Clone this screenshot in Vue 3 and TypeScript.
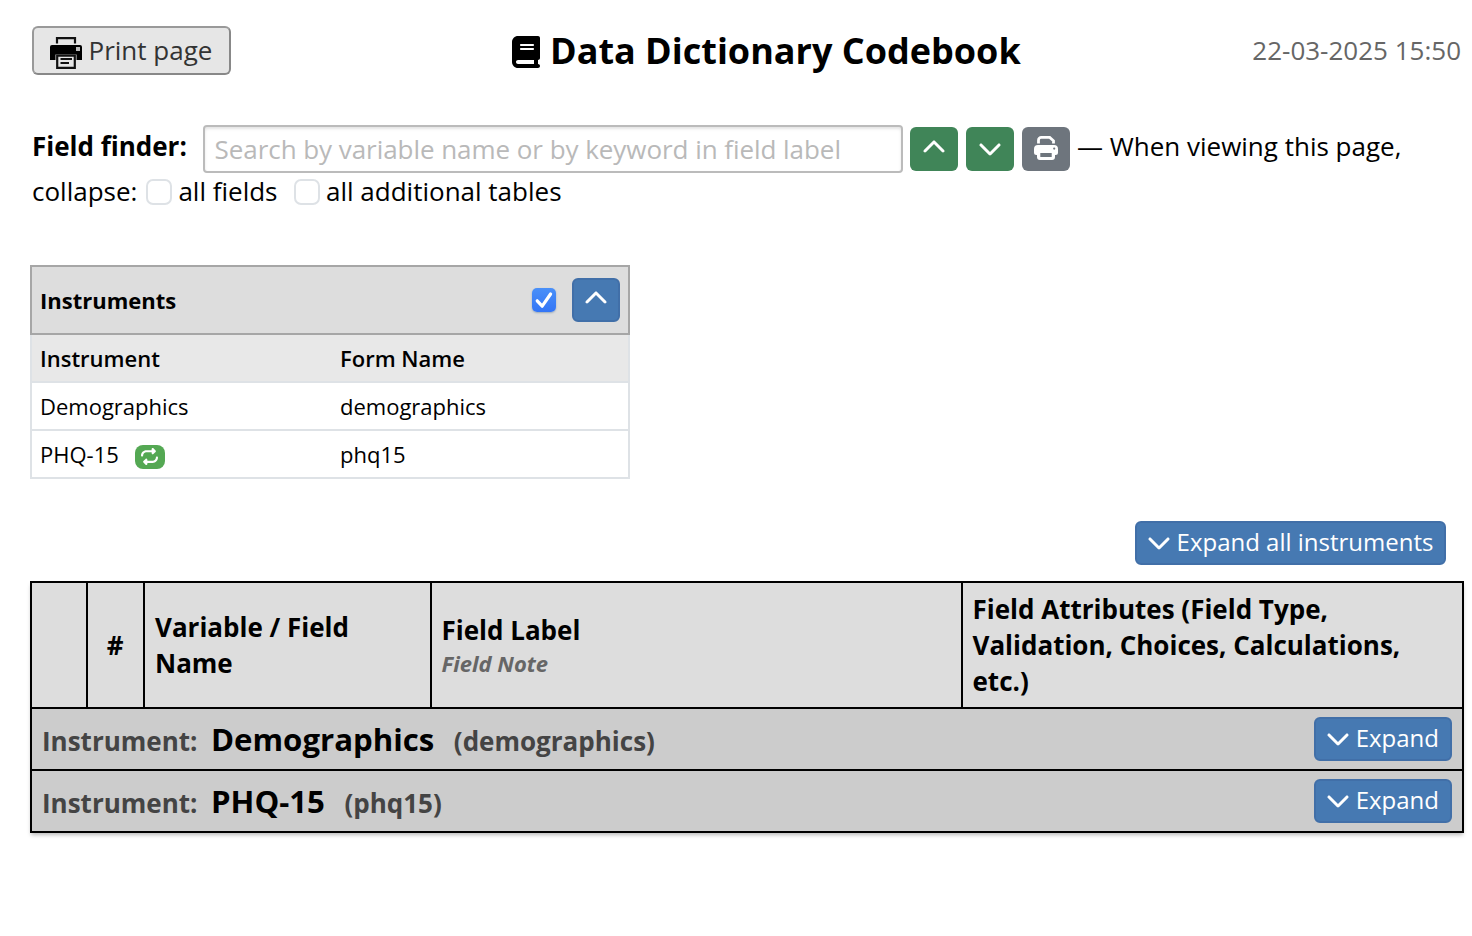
<script setup lang="ts">
import { ref } from 'vue'

interface Instrument {
  label: string
  form: string
  repeating: boolean
}

const instruments: Instrument[] = [
  { label: 'Demographics', form: 'demographics', repeating: false },
  { label: 'PHQ-15', form: 'phq15', repeating: true },
]

const search = ref('')
const collapseFields = ref(false)
const collapseTables = ref(false)

const up =
  'M233.4 105.4c12.5-12.5 32.8-12.5 45.3 0l192 192c12.5 12.5 12.5 32.8 0 45.3s-32.8 12.5-45.3 0L256 173.3 86.6 342.6c-12.5 12.5-32.8 12.5-45.3 0s-12.5-32.8 0-45.3l192-192z'
const down =
  'M233.4 406.6c12.5 12.5 32.8 12.5 45.3 0l192-192c12.5-12.5 12.5-32.8 0-45.3s-32.8-12.5-45.3 0L256 338.7 86.6 169.4c-12.5-12.5-32.8-12.5-45.3 0s-12.5 32.8 0 45.3l192 192z'
const book =
  'M96 0C43 0 0 43 0 96V416c0 53 43 96 96 96H384h32c17.7 0 32-14.3 32-32s-14.3-32-32-32V384c17.7 0 32-14.3 32-32V32c0-17.7-14.3-32-32-32H384 96zm0 384H352v64H96c-17.7 0-32-14.3-32-32s14.3-32 32-32zm32-240c0-8.8 7.2-16 16-16H336c8.8 0 16 7.2 16 16s-7.2 16-16 16H144c-8.8 0-16-7.2-16-16zm16 48H336c8.8 0 16 7.2 16 16s-7.2 16-16 16H144c-8.8 0-16-7.2-16-16s7.2-16 16-16z'
const repeat =
  'M0 224c0 17.7 14.3 32 32 32s32-14.3 32-32c0-53 43-96 96-96H320v32c0 12.9 7.8 24.6 19.8 29.6s25.7 2.2 34.9-6.9l64-64c12.5-12.5 12.5-32.8 0-45.3l-64-64c-9.2-9.2-22.9-11.9-34.9-6.9S320 19.1 320 32V64H160C71.6 64 0 135.6 0 224zm512 64c0-17.7-14.3-32-32-32s-32 14.3-32 32c0 53-43 96-96 96H192V352c0-12.9-7.8-24.6-19.8-29.6s-25.7-2.2-34.9 6.9l-64 64c-12.5 12.5-12.5 32.8 0 45.3l64 64c9.2 9.2 22.9 11.9 34.9 6.9s19.8-16.6 19.8-29.6V448H352c88.4 0 160-71.6 160-160z'
</script>

<template>
  <main class="page">
    <header class="top">
      <button class="print" type="button">
        <svg class="print-icon" viewBox="0 0 32 32">
          <path d="M7 6.5V1.1h18v5.4" fill="none" stroke="#111" stroke-width="2.2" />
          <path d="M2 8h28a2 2 0 0 1 2 2v13H0V10a2 2 0 0 1 2-2z" fill="#000" />
          <rect x="26" y="10" width="4" height="4" fill="#bbb" />
          <path d="M5.5 17.5h21V24h-21z" fill="#e6e6e6" />
          <path d="M7.2 18.6h17.6v12.2H7.2z" fill="#e6e6e6" stroke="#111" stroke-width="2.2" />
          <path d="M10.5 22h11.5M10.5 26h8.5" stroke="#111" stroke-width="2" />
        </svg>
        <span>Print page</span>
      </button>
      <h1 class="title">
        <svg class="book" viewBox="0 0 448 512"><path :d="book" fill="#000" /></svg>
        <span>Data Dictionary Codebook</span>
      </h1>
      <time class="stamp">22-03-2025 15:50</time>
    </header>

    <section class="finder">
      <div class="finder-row">
        <label class="finder-label" for="finder">Field finder:</label>
        <input id="finder" v-model="search" class="search" type="text" placeholder="Search by variable name or by keyword in field label" />
        <button class="square green" type="button"><svg class="fa" viewBox="0 0 512 512"><path :d="up" /></svg></button>
        <button class="square green" type="button"><svg class="fa" viewBox="0 0 512 512"><path :d="down" /></svg></button>
        <button class="square gray" type="button">
          <svg class="fa" viewBox="0 0 24 24">
            <path d="M4.5 7.5V4.2A2.8 2.8 0 0 1 7.3 1.4h8.4l3.8 3.4v2.7" fill="none" stroke="#fff" stroke-width="2.8" />
            <path fill-rule="evenodd" d="M4 9h16a4 4 0 0 1 4 4v3.5a2.5 2.5 0 0 1-2.5 2.5H21v2a3 3 0 0 1-3 3H6a3 3 0 0 1-3-3v-2h-.5A2.5 2.5 0 0 1 0 16.500V13a4 4 0 0 1 4-4zM6.300 17v4h11.400v-4zM20.200 11.500a1.100 1.100 0 1 0 0 2.200 1.100 1.100 0 1 0 0-2.200z" />
          </svg>
        </button>
        <span class="viewing">— When viewing this page,</span>
      </div>
      <div class="collapse-row">
        <span class="collapse-word">collapse:</span>
        <label class="choice first"><input v-model="collapseFields" class="check" type="checkbox" /><span>all fields</span></label>
        <label class="choice"><input v-model="collapseTables" class="check" type="checkbox" /><span>all additional tables</span></label>
      </div>
    </section>

    <section class="instruments">
      <div class="inst-head">
        <span class="inst-title">Instruments</span>
        <span class="checked"><svg viewBox="0 0 24 24"><path d="M5.2 12.8l5 5.4L18.6 6" fill="none" stroke="#fff" stroke-width="3.2" stroke-linecap="round" stroke-linejoin="round" /></svg></span>
        <button class="square blue" type="button"><svg class="fa" viewBox="0 0 512 512"><path :d="up" /></svg></button>
      </div>
      <div class="inst-row labels"><span class="cell">Instrument</span><span class="cell">Form Name</span></div>
      <div v-for="item in instruments" :key="item.form" class="inst-row">
        <span class="cell">{{ item.label }}<span v-if="item.repeating" class="badge"><svg viewBox="0 0 512 512"><path :d="repeat" fill="#fff" /></svg></span></span>
        <span class="cell">{{ item.form }}</span>
      </div>
    </section>

    <div class="expand-all">
      <button class="expand" type="button"><svg class="fa" viewBox="0 0 512 512"><path :d="down" /></svg><span>Expand all instruments</span></button>
    </div>

    <section class="codebook">
      <div class="columns">
        <div class="col"></div>
        <div class="col num">#</div>
        <div class="col variable"><span>Variable / Field Name</span></div>
        <div class="col"><span>Field Label</span><em class="note">Field Note</em></div>
        <div class="col"><span>Field Attributes (Field Type, Validation, Choices, Calculations, etc.)</span></div>
      </div>
      <div v-for="item in instruments" :key="item.form" class="band">
        <span class="muted">Instrument:</span>
        <span class="name">{{ item.label }}</span>
        <span class="muted">({{ item.form }})</span>
        <button class="expand" type="button"><svg class="fa" viewBox="0 0 512 512"><path :d="down" /></svg><span>Expand</span></button>
      </div>
    </section>
  </main>
</template>

<style>
body {
  background: #fff;
}
</style>

<style scoped>
* {
  box-sizing: border-box;
}
.page {
  width: 1472px;
  height: 936px;
  padding: 26px 8px 0 30px;
  overflow: hidden;
  font: 26px/36px 'Open Sans', sans-serif;
  color: #000;
}
button {
  margin: 0;
  font: inherit;
}
svg {
  display: block;
  flex: none;
}
.top {
  display: flex;
  align-items: center;
  height: 49px;
  padding: 0 3px 0 2px;
  white-space: nowrap;
}
.print {
  display: flex;
  align-items: center;
  width: 199px;
  height: 49px;
  padding: 0 0 2px 16px;
  border: 2px solid #999;
  border-right-color: #888;
  border-bottom-color: #888;
  border-radius: 6px;
  background: #e6e6e6;
  color: #333;
}
.print-icon {
  width: 32px;
  height: 32px;
  margin: 6px 6.5px 0 0;
}
.title {
  display: flex;
  align-items: center;
  margin: 0 0 0 281px;
  font-size: 36px;
  font-weight: 700;
}
.book {
  width: 28px;
  height: 32px;
  margin: 3px 10px 0 0;
}
.stamp {
  margin-left: auto;
  padding-bottom: 2px;
  color: #666;
}
.finder {
  padding: 50px 0 0 2px;
}
.finder-row {
  display: flex;
  height: 48px;
  white-space: nowrap;
}
.finder-label {
  width: 171px;
  padding-top: 3px;
  font-weight: 700;
}
.search {
  width: 700px;
  height: 48px;
  margin: 0 7px 0 0;
  padding: 0 9.5px;
  border: 2px solid #bbb;
  border-radius: 4px;
  outline: 0;
  box-shadow: inset 0 2px 3px #e4e4e4;
  font: inherit;
  letter-spacing: -0.05px;
}
.search::placeholder {
  color: #b9b9b9;
  opacity: 1;
}
.square {
  display: flex;
  align-items: center;
  justify-content: center;
  width: 48px;
  height: 44px;
  padding: 0 0 2px;
  border: 0;
  border-radius: 6px;
}
.finder-row .square {
  margin: 2px 8px 0 0;
}
.green {
  background: #408558;
}
.gray {
  background: #6e757d;
}
.blue {
  border: 2px solid #416fa8;
  background: #4679b2;
}
.fa {
  width: 24px;
  height: 24px;
  fill: #fff;
}
.viewing {
  margin-left: -1px;
  padding-top: 3px;
}
.collapse-row {
  display: flex;
  align-items: center;
  height: 36px;
  margin-top: 1px;
}
.collapse-row span {
  padding-bottom: 2px;
}
.choice {
  display: flex;
  align-items: center;
  margin-left: 16.5px;
}
.choice.first {
  margin-left: 9px;
}
.check {
  appearance: none;
  width: 26px;
  height: 26px;
  margin: 0 6px 0 0;
  border: 2px solid #dee2e6;
  border-radius: 7px;
  background: #fff;
}
.instruments {
  width: 600px;
  margin-top: 55px;
  font-size: 22px;
}
.inst-head {
  display: flex;
  align-items: center;
  height: 70px;
  padding: 0 8px;
  border: 2px solid #a6a6a6;
  background: #ddd;
}
.inst-title {
  margin-right: auto;
  font-weight: 700;
}
.checked {
  width: 24px;
  height: 24px;
  margin-right: 16px;
  border-radius: 5px;
  background: linear-gradient(#4a90f8, #3375f6);
  box-shadow: 0 1px 2px #9ab;
}
.inst-row {
  display: grid;
  grid-template-columns: 300px 1fr;
  align-items: center;
  height: 48px;
  padding-left: 8px;
  border: solid #dee2e6;
  border-width: 0 2px 2px;
}
.labels {
  background: #e8e8e8;
  font-weight: 600;
}
.cell {
  display: flex;
  align-items: center;
}
.badge {
  display: flex;
  align-items: center;
  justify-content: center;
  width: 30px;
  height: 24px;
  margin: 5px 0 0 16px;
  border-radius: 8px;
  background: #54a853;
}
.badge svg {
  width: 17px;
  height: 17px;
}
.expand-all {
  display: flex;
  justify-content: flex-end;
  margin: 42px 18px 16px 0;
}
.expand {
  display: flex;
  align-items: center;
  height: 44px;
  padding: 0 11px 2px 9.5px;
  border: 2px solid #416fa8;
  border-radius: 6px;
  background: #4679b2;
  color: #fff;
  font-size: 24px;
  font-weight: 400;
  white-space: nowrap;
}
.expand-all .expand {
  padding-right: 10.5px;
}
.expand .fa {
  margin: 0 6px 0 0;
}
.codebook {
  width: 1434px;
  border: 2px solid #000;
  box-shadow: 0 3px 4px -1px #bbb;
  font-weight: 700;
}
.columns {
  display: grid;
  grid-template-columns: 56px 57px 287px 531px 499px;
  height: 124px;
  background: #ddd;
}
.col {
  display: flex;
  flex-direction: column;
  justify-content: center;
  padding: 0 10px 0 9.5px;
  border-right: 2px solid #000;
}
.col:last-child {
  border-right: 0;
}
.variable {
  padding-left: 10px;
}
.num {
  align-items: center;
}
.note {
  color: #666;
  font-size: 22px;
  line-height: 30px;
}
.band {
  display: flex;
  align-items: center;
  height: 62px;
  padding: 0 10px;
  border-top: 2px solid #000;
  background: #ccc;
}
.muted {
  padding-top: 4px;
  color: #444;
}
.name {
  margin: 0 19.5px 0 13.5px;
  font-size: 31.2px;
}
.band .expand {
  margin-left: auto;
}
</style>
